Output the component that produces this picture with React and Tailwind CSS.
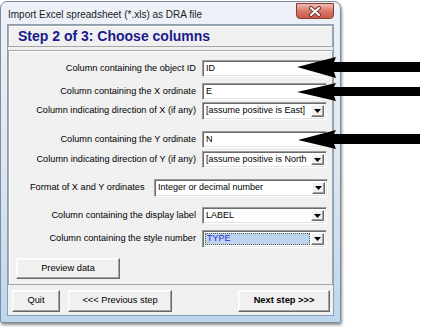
import React from "react";

const F = "font-['Liberation_Sans',Arial,sans-serif]";

function Sunken({ className = "", children }) {
  return (
    <div
      className={`border border-t-[#9c9c9c] border-l-[#9c9c9c] border-r-white border-b-white shadow-[inset_1px_1px_0_#6b6b6b,inset_-1px_-1px_0_#e3e3e3] bg-white ${className}`}
    >
      {children}
    </div>
  );
}

function TextBox({ value, h }) {
  return (
    <Sunken className={`w-[125px] ${h} flex items-center pl-[3px] text-[9px] text-black`}>
      {value}
    </Sunken>
  );
}

function DropBtn() {
  return (
    <div className="w-[13px] shrink-0 self-stretch my-[2px] mr-[2px] bg-[#f0f0f0] border border-t-white border-l-white border-r-[#6b6b6b] border-b-[#6b6b6b] shadow-[inset_-1px_-1px_0_#a0a0a0] flex items-center justify-center">
      <svg width="7" height="4" viewBox="0 0 7 4">
        <polygon points="0,0 7,0 3.5,4" fill="#000" />
      </svg>
    </div>
  );
}

function Select({ value, w = "w-[125px]", h, focused }) {
  return (
    <Sunken className={`${w} ${h} flex items-stretch text-[9px]`}>
      {focused ? (
        <div className="flex-1 my-[2px] ml-[2px] mr-[1px] bg-[#bcd4ee] border border-dotted border-[#5b5b3a] flex items-center pl-[1px] text-[#2a2ad8]">
          {value}
        </div>
      ) : (
        <div className="flex-1 min-w-0 flex items-center pl-[3px] text-black overflow-hidden whitespace-nowrap">
          {value}
        </div>
      )}
      <DropBtn />
    </Sunken>
  );
}

function Btn({ children, className = "", bold }) {
  return (
    <div
      className={`bg-[#f0f0f0] border border-t-white border-l-white border-r-[#696969] border-b-[#696969] shadow-[inset_-1px_-1px_0_#a0a0a0,inset_1px_1px_0_#f8f8f8] flex items-center justify-center text-[9.3px] text-black ${bold ? "font-bold" : ""} ${className}`}
    >
      {children}
    </div>
  );
}

function Row({ label, children, mt, h }) {
  return (
    <div className={`flex items-center ${mt} ${h}`}>
      <div className="w-[188px] text-right text-[9.2px] text-black whitespace-nowrap pr-[1px]">{label}</div>
      <div className="ml-[5px] flex">{children}</div>
    </div>
  );
}

export default function App() {
  return (
    <div className={`w-[433px] h-[327px] bg-white relative overflow-hidden ${F}`}>
      <div className="mt-[1px] w-[341px] h-[322px] rounded-t-[7px] rounded-b-[2px] border border-[#7d8a98] bg-gradient-to-b from-[#edf2f8] via-[#dde7f2] to-[#bcd6ee] flex flex-col shadow-[1px_2px_3px_rgba(0,0,0,0.45)]">
        {/* title bar */}
        <div className="h-[22px] flex items-start relative">
          <div className="pl-[7px] pt-[8px] text-[10px] leading-[10px] text-[#1b1b1b] whitespace-nowrap">
            Import Excel spreadsheet (*.xls) as DRA file
          </div>
          <div className="absolute left-[295px] top-[1px] w-[38px] h-[16px] rounded-b-[4px] border border-[#8a3a30] bg-gradient-to-b from-[#eebbb2] via-[#d9786a] to-[#c85a48] flex items-center justify-center">
            <svg width="14" height="11" viewBox="0 0 14 11">
              <path d="M3 2 L11 9 M11 2 L3 9" stroke="#6a3a34" strokeWidth="4" strokeLinecap="round" />
              <path d="M3 2 L11 9 M11 2 L3 9" stroke="#fff" strokeWidth="2" strokeLinecap="round" />
            </svg>
          </div>
        </div>
        {/* client */}
        <div className="mx-[6px] h-[292px] bg-[#f0f0f0] border border-[#8d9fb3] flex flex-col">
          <div className="h-[22px] border border-[#a6a6a6] shadow-[inset_1px_1px_0_#fff] flex items-center pl-[9px]">
            <span className="text-[14px] font-bold text-[#1a1a8c] leading-none">Step 2 of 3: Choose columns</span>
          </div>
          <div className="mt-[3px] h-[235px] border border-[#a6a6a6] shadow-[inset_1px_1px_0_#fff] flex flex-col">
            <Row label="Column containing the object ID" mt="mt-[9px]" h="h-[17px]">
              <TextBox value="ID" h="h-[17px]" />
            </Row>
            <Row label="Column containing the X ordinate" mt="mt-[6px]" h="h-[17px]">
              <TextBox value="E" h="h-[17px]" />
            </Row>
            <Row label="Column indicating direction of X (if any)" mt="mt-[2px]" h="h-[18px]">
              <Select value="[assume positive is East]" h="h-[18px]" />
            </Row>
            <Row label="Column containing the Y ordinate" mt="mt-[11px]" h="h-[17px]">
              <TextBox value="N" h="h-[17px]" />
            </Row>
            <Row label="Column indicating direction of Y (if any)" mt="mt-[3px]" h="h-[17px]">
              <Select value="[assume positive is North" h="h-[17px]" />
            </Row>
            <div className="mt-[11px] h-[18px] flex items-center">
              <div className="pl-[21px] text-[9.2px] text-black whitespace-nowrap">Format of X and Y ordinates</div>
              <div className="ml-auto mr-[4px] flex">
                <Select value="Integer or decimal number" w="w-[174px]" h="h-[18px]" />
              </div>
            </div>
            <Row label="Column containing the display label" mt="mt-[10px]" h="h-[17px]">
              <Select value="LABEL" h="h-[17px]" />
            </Row>
            <Row label="Column containing the style number" mt="mt-[6px]" h="h-[18px]">
              <Select value="TYPE" h="h-[18px]" focused />
            </Row>
            <div className="mt-[10px] ml-[7px] flex">
              <Btn className="w-[104px] h-[21px]">Preview data</Btn>
            </div>
          </div>
          <div className="mt-[5px] flex items-center pl-[4px] pr-[3px]">
            <Btn className="w-[48px] h-[22px]">Quit</Btn>
            <Btn className="ml-[8px] w-[104px] h-[22px]">&lt;&lt;&lt; Previous step</Btn>
            <Btn className="ml-auto w-[92px] h-[22px]" bold>Next step &gt;&gt;&gt;</Btn>
          </div>
        </div>
      </div>
      {/* annotation arrows */}
      <svg className="absolute left-0 top-0" width="433" height="327" viewBox="0 0 433 327">
        <polygon points="297,67 336,57 334,62 420,62 420,72 334,72 336,78" fill="#000" />
        <polygon points="297,92 336,83 334,87 420,87 420,96 334,96 336,101" fill="#000" />
        <polygon points="298,140 336,130 334,134 420,134 420,144 334,144 336,149" fill="#000" />
      </svg>
    </div>
  );
}
